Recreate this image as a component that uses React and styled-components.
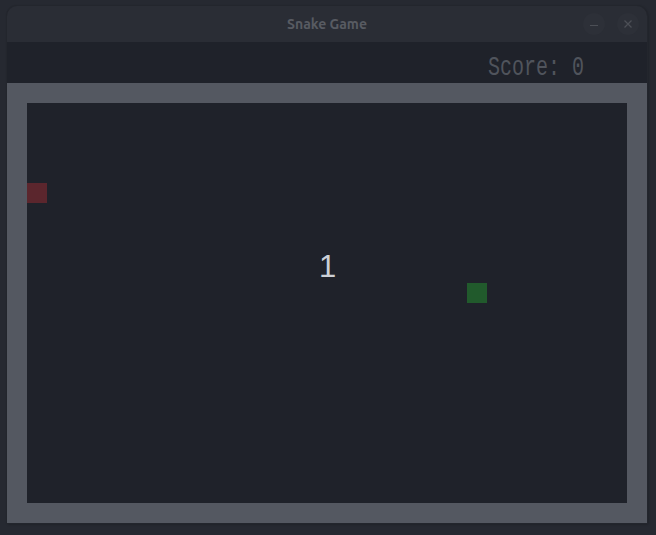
import React from "react";
import styled, { createGlobalStyle } from "styled-components";

const CELL = 20;

const GlobalStyle = createGlobalStyle`
  html, body {
    margin: 0;
    padding: 0;
    background: #262931;
    width: 656px;
    height: 535px;
    overflow: hidden;
  }
`;

const Desktop = styled.div`
  width: 656px;
  height: 535px;
  padding: 6px 9px 12px 7px;
  box-sizing: border-box;
`;

const Window = styled.div`
  width: 640px;
  display: flex;
  flex-direction: column;
  border-radius: 10px 10px 0 0;
  overflow: hidden;
  box-shadow: 0 0 0 1px #23262d, 1px 1px 3px rgba(0, 0, 0, 0.35);
`;

const TitleBar = styled.div`
  height: 36px;
  background: #2a2d35;
  position: relative;
  display: flex;
  align-items: center;
  justify-content: center;
  font-family: "Ubuntu", "Noto Sans", "DejaVu Sans", sans-serif;
  font-weight: 700;
  font-size: 14px;
  color: #585b62;
`;

const Controls = styled.div`
  position: absolute;
  right: 8px;
  top: 7px;
  display: flex;
  gap: 12px;
`;

const CtrlButton = styled.div`
  width: 22px;
  height: 22px;
  border-radius: 50%;
  background: #2d3038;
  display: flex;
  align-items: center;
  justify-content: center;
`;

const Header = styled.div`
  height: 41px;
  background: #1f222a;
  display: flex;
  align-items: center;
  justify-content: flex-end;
  padding-right: 63px;
`;

const Score = styled.div`
  font-family: "Liberation Mono", "DejaVu Sans Mono", monospace;
  font-size: 20px;
  color: #50545c;
  transform: scaleY(1.35);
  margin-top: 10px;
`;

const Frame = styled.div`
  background: #545861;
  padding: 20px;
`;

const Field = styled.div`
  width: 600px;
  height: 400px;
  background: #1f222a;
  position: relative;
`;

const Cell = styled.div`
  position: absolute;
  width: ${CELL}px;
  height: ${CELL}px;
  background: ${(p) => p.$color};
`;

const Countdown = styled.div`
  position: absolute;
  left: 292px;
  top: 146px;
  font-family: "Liberation Sans", "Noto Sans", sans-serif;
  font-size: 31px;
  color: #ccd0d6;
`;

const snake = [{ x: 0, y: 4 }];
const food = { x: 22, y: 9 };

export default function App() {
  return (
    <>
      <GlobalStyle />
      <Desktop>
        <Window>
          <TitleBar>
            Snake Game
            <Controls>
              <CtrlButton>
                <svg width="10" height="10" viewBox="0 0 10 10">
                  <path d="M1 6.5h8" stroke="#4c4f56" strokeWidth="1.2" />
                </svg>
              </CtrlButton>
              <CtrlButton>
                <svg width="10" height="10" viewBox="0 0 10 10">
                  <path
                    d="M1.5 1.5l7 7M8.5 1.5l-7 7"
                    stroke="#4c4f56"
                    strokeWidth="1.3"
                  />
                </svg>
              </CtrlButton>
            </Controls>
          </TitleBar>
          <Header>
            <Score>Score: 0</Score>
          </Header>
          <Frame>
            <Field>
              {snake.map((s, i) => (
                <Cell
                  key={i}
                  $color="#5b262d"
                  style={{ left: s.x * CELL, top: s.y * CELL }}
                />
              ))}
              <Cell
                $color="#215a2c"
                style={{ left: food.x * CELL, top: food.y * CELL }}
              />
              <Countdown>1</Countdown>
            </Field>
          </Frame>
        </Window>
      </Desktop>
    </>
  );
}
